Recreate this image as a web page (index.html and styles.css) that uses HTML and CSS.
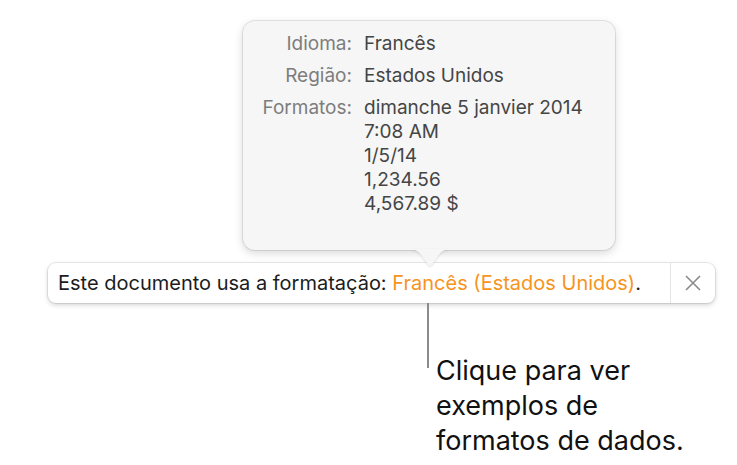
FILE: index.html
```html
<!DOCTYPE html>
<html lang="pt">
<head>
<meta charset="utf-8">
<link rel="stylesheet" href="styles.css">
</head>
<body>
<div class="stage">
  <div class="popover">
    <div class="grid">
      <div class="label">Idioma:</div>
      <div class="value">Francês</div>
      <div class="label">Região:</div>
      <div class="value">Estados Unidos</div>
      <div class="label">Formatos:</div>
      <div class="value">dimanche 5 janvier 2014<br>7:08 AM<br>1/5/14<br>1,234.56<br>4,567.89 $</div>
    </div>
    <svg class="arrow" width="44" height="19" viewBox="0 0 44 19">
      <path d="M0 0 C8 0 10 2 14 7 L19.5 15 Q22 18.5 24.5 15 L30 7 C34 2 36 0 44 0 Z" fill="#f6f6f6"/>
    </svg>
  </div>
  <div class="bar">
    <div class="msg">Este documento usa a formatação: <span class="link">Francês (Estados Unidos)</span>.</div>
    <div class="close">
      <svg width="18" height="18" viewBox="0 0 18 18"><path d="M2 2 L16 16 M16 2 L2 16" stroke="#8a8a8a" stroke-width="1.6" fill="none"/></svg>
    </div>
  </div>
  <div class="callout">
    <div class="line"></div>
    <div class="note">Clique para ver<br>exemplos de<br>formatos de dados.</div>
  </div>
</div>
</body>
</html>
```
FILE: styles.css
```css
html, body {
  margin: 0;
  padding: 0;
  background: #ffffff;
}
body {
  font-family: Inter, Roboto, "Liberation Sans", sans-serif;
  width: 737px;
  height: 465px;
  overflow: hidden;
}
.stage {
  padding-top: 21px;
}
.popover {
  position: relative;
  margin-left: 243px;
  width: 372px;
  height: 229px;
  box-sizing: border-box;
  background: #f6f6f6;
  border-radius: 12px;
  box-shadow: 0 0 0 1px rgba(0,0,0,0.09), 0 3px 10px rgba(0,0,0,0.16);
  padding-top: 11px;
}
.grid {
  display: grid;
  grid-template-columns: 109px 1fr;
  column-gap: 12px;
  row-gap: 8px;
  font-size: 19px;
  line-height: 24px;
}
.label {
  text-align: right;
  color: #7d7d7d;
}
.value {
  color: #454545;
}
.arrow {
  position: absolute;
  left: 165px;
  top: 228px;
  display: block;
  filter: drop-shadow(0 1px 1px rgba(0,0,0,0.12));
}
.bar {
  margin-top: 13px;
  margin-left: 48px;
  width: 667px;
  height: 40px;
  box-sizing: border-box;
  background: #ffffff;
  border-radius: 8px;
  box-shadow: 0 0 0 1px rgba(0,0,0,0.08), 0 2px 5px rgba(0,0,0,0.18);
  display: flex;
  align-items: center;
}
.msg {
  flex: 1;
  padding-left: 10px;
  font-size: 20px;
  color: #1c1c1c;
  white-space: nowrap;
}
.link {
  color: #f7941d;
}
.close {
  width: 45px;
  height: 40px;
  border-left: 1px solid #e4e4e4;
  box-sizing: border-box;
  display: flex;
  align-items: center;
  justify-content: center;
}
.callout {
  display: flex;
  align-items: flex-start;
  margin-left: 427px;
}
.line {
  width: 2px;
  height: 65px;
  background: #8c8c8c;
}
.note {
  margin-left: 7px;
  padding-top: 50px;
  font-size: 27px;
  line-height: 35px;
  color: #111111;
}
```
